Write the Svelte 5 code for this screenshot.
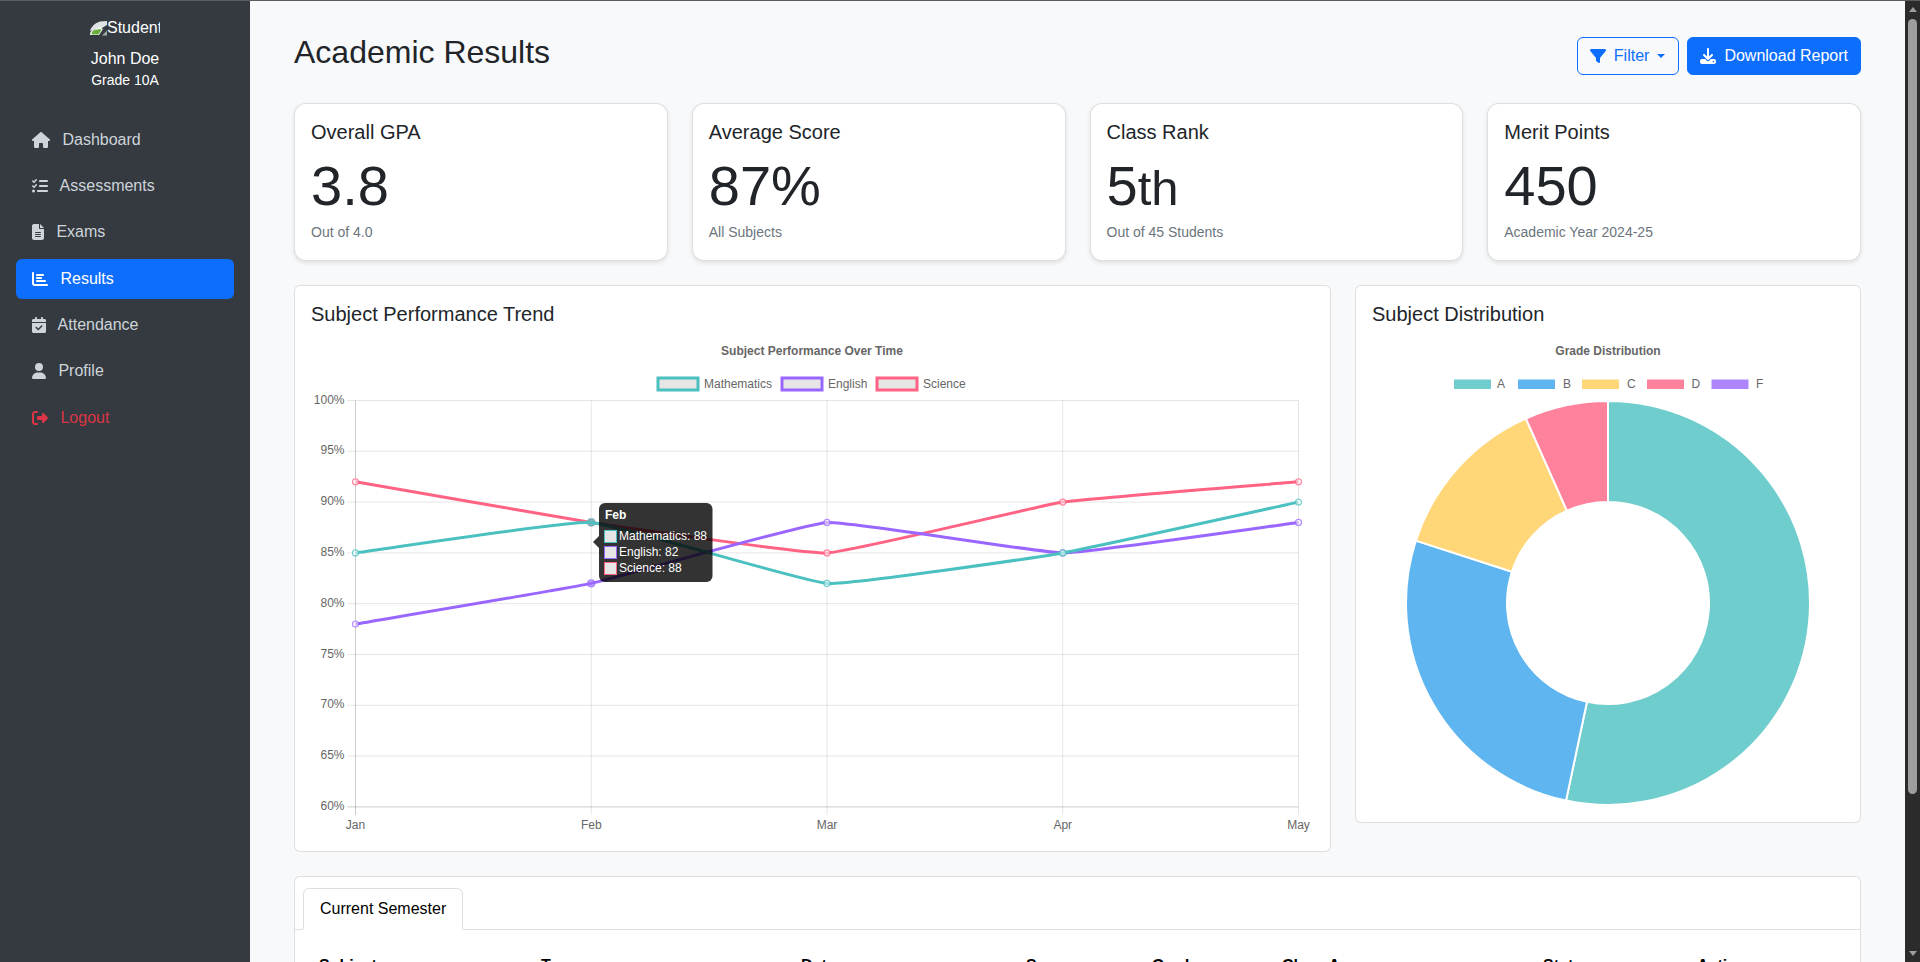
<script>
	const navItems = [
		{ label: 'Dashboard', vb: '0 0 576 512', d: 'M575.8 255.5c0 18-15 32.1-32 32.1h-32l.7 160.2c0 2.7-.2 5.4-.5 8.1V472c0 22.1-17.9 40-40 40H456c-1.1 0-2.2 0-3.3-.1c-1.4 .1-2.8 .1-4.2 .1H416 392c-22.1 0-40-17.9-40-40V448 384c0-17.7-14.3-32-32-32H256c-17.7 0-32 14.3-32 32v64 24c0 22.1-17.9 40-40 40H160 128.1c-1.5 0-3-.1-4.5-.2c-1.2 .1-2.4 .2-3.6 .2H104c-22.1 0-40-17.9-40-40V360c0-.9 0-1.9 .1-2.8V287.6H32c-18 0-32-14-32-32.1c0-9 3-17 10-24L266.4 8c7-7 15-8 22-8s15 2 21 7L564.8 231.5c8 7 12 15 11 24z' },
		{ label: 'Assessments', vb: '0 0 512 512', d: 'M152.1 38.2c9.9 8.9 10.7 24 1.8 33.9l-72 80c-4.4 4.9-10.6 7.8-17.2 7.9s-12.9-2.4-17.6-7L7 113C-2.3 103.6-2.3 88.4 7 79s24.6-9.4 33.9 0l22.1 22.1 55.1-61.2c8.9-9.9 24-10.7 33.9-1.8zm0 160c9.9 8.9 10.7 24 1.8 33.9l-72 80c-4.4 4.9-10.6 7.8-17.2 7.9s-12.9-2.4-17.6-7L7 273c-9.4-9.4-9.4-24.6 0-33.9s24.6-9.4 33.9 0l22.1 22.1 55.1-61.2c8.9-9.9 24-10.7 33.9-1.8zM224 96c0-17.7 14.3-32 32-32H480c17.7 0 32 14.3 32 32s-14.3 32-32 32H256c-17.7 0-32-14.3-32-32zm0 160c0-17.7 14.3-32 32-32H480c17.7 0 32 14.3 32 32s-14.3 32-32 32H256c-17.7 0-32-14.3-32-32zM160 416c0-17.7 14.3-32 32-32H480c17.7 0 32 14.3 32 32s-14.3 32-32 32H192c-17.7 0-32-14.3-32-32zM48 368a48 48 0 1 1 0 96 48 48 0 1 1 0-96z' },
		{ label: 'Exams', vb: '0 0 384 512', d: 'M64 0C28.7 0 0 28.7 0 64V448c0 35.3 28.7 64 64 64H320c35.3 0 64-28.7 64-64V160H256c-17.7 0-32-14.3-32-32V0H64zM256 0V128H384L256 0zM112 256H272c8.8 0 16 7.2 16 16s-7.2 16-16 16H112c-8.8 0-16-7.2-16-16s7.2-16 16-16zm0 64H272c8.8 0 16 7.2 16 16s-7.2 16-16 16H112c-8.8 0-16-7.2-16-16s7.2-16 16-16zm0 64H272c8.8 0 16 7.2 16 16s-7.2 16-16 16H112c-8.8 0-16-7.2-16-16s7.2-16 16-16z' },
		{ label: 'Results', active: true, vb: '0 0 512 512', d: 'M32 32c17.7 0 32 14.3 32 32V400c0 8.8 7.2 16 16 16H480c17.7 0 32 14.3 32 32s-14.3 32-32 32H80c-44.2 0-80-35.8-80-80V64C0 46.3 14.3 32 32 32zm96 96c0-17.7 14.3-32 32-32l192 0c17.7 0 32 14.3 32 32s-14.3 32-32 32l-192 0c-17.7 0-32-14.3-32-32zm32 64H288c17.7 0 32 14.3 32 32s-14.3 32-32 32H160c-17.7 0-32-14.3-32-32s14.3-32 32-32zm0 96H416c17.7 0 32 14.3 32 32s-14.3 32-32 32H160c-17.7 0-32-14.3-32-32s14.3-32 32-32z' },
		{ label: 'Attendance', vb: '0 0 448 512', d: 'M128 0c17.7 0 32 14.3 32 32V64H288V32c0-17.7 14.3-32 32-32s32 14.3 32 32V64h48c26.5 0 48 21.5 48 48v48H0V112C0 85.5 21.5 64 48 64H96V32c0-17.7 14.3-32 32-32zM0 192H448V464c0 26.5-21.5 48-48 48H48c-26.5 0-48-21.5-48-48V192zM329 305c9.4-9.4 9.4-24.6 0-33.9s-24.6-9.4-33.9 0l-95 95-47-47c-9.4-9.4-24.6-9.4-33.9 0s-9.4 24.6 0 33.9l64 64c9.4 9.4 24.6 9.4 33.9 0L329 305z' },
		{ label: 'Profile', vb: '0 0 448 512', d: 'M224 256A128 128 0 1 0 224 0a128 128 0 1 0 0 256zm-45.7 48C79.8 304 0 383.8 0 482.3C0 498.7 13.3 512 29.7 512H418.3c16.4 0 29.7-13.3 29.7-29.7C448 383.8 368.2 304 269.7 304H178.3z' },
		{ label: 'Logout', danger: true, vb: '0 0 512 512', d: 'M377.9 105.9L500.7 228.7c7.2 7.2 11.3 17.1 11.3 27.3s-4.1 20.1-11.3 27.3L377.9 406.1c-6.4 6.4-15 9.9-24 9.9c-18.7 0-33.9-15.2-33.9-33.9l0-62.1-128 0c-17.7 0-32-14.3-32-32l0-64c0-17.7 14.3-32 32-32l128 0 0-62.1c0-18.7 15.2-33.9 33.9-33.9c9 0 17.6 3.6 24 9.9zM160 96L96 96c-17.7 0-32 14.3-32 32l0 256c0 17.7 14.3 32 32 32l64 0c17.7 0 32 14.3 32 32s-14.3 32-32 32l-64 0c-53 0-96-43-96-96L0 128C0 75 43 32 96 32l64 0c17.7 0 32 14.3 32 32s-14.3 32-32 32z' }
	];

	const stats = [
		{ title: 'Overall GPA', value: '3.8', note: 'Out of 4.0' },
		{ title: 'Average Score', value: '87%', note: 'All Subjects' },
		{ title: 'Class Rank', value: '5', suffix: 'th', note: 'Out of 45 Students' },
		{ title: 'Merit Points', value: '450', note: 'Academic Year 2024-25' }
	];

	// line chart, in page coordinates (the svg viewBox starts at the canvas corner)
	const months = ['Jan', 'Feb', 'Mar', 'Apr', 'May'];
	const left = 355.5;
	const step = 235.75;
	const top = 400.5;
	const perPct = 10.16;
	const bottom = top + 40 * perPct;
	const right = left + 4 * step;
	const xAt = (i) => left + i * step;
	const yAt = (v) => top + (100 - v) * perPct;
	const ticks = [100, 95, 90, 85, 80, 75, 70, 65, 60];

	const series = [
		{ name: 'Science', color: '#ff6384', data: [92, 88, 85, 90, 92] },
		{ name: 'English', color: '#9966ff', data: [78, 82, 88, 85, 88] },
		{ name: 'Mathematics', color: '#4bc0c0', data: [85, 88, 82, 85, 90] }
	];

	const lineLegend = [
		{ name: 'Mathematics', color: '#4bc0c0', x: 658, tx: 704 },
		{ name: 'English', color: '#9966ff', x: 782, tx: 828 },
		{ name: 'Science', color: '#ff6384', x: 877, tx: 923 }
	];

	const tooltipRows = [
		{ text: 'Mathematics: 88', color: '#4bc0c0', y: 530.5 },
		{ text: 'English: 82', color: '#9966ff', y: 546.5 },
		{ text: 'Science: 88', color: '#ff6384', y: 562.5 }
	];

	// same control points as chart.js with a small tension
	function splinePath(data, tension = 0.1) {
		const pts = data.map((v, i) => [xAt(i), yAt(v)]);
		let d = `M${pts[0][0]} ${pts[0][1]}`;
		const ctrl = pts.map((p, i) => {
			const a = pts[i - 1] || p;
			const b = pts[i + 1] || p;
			const d1 = Math.hypot(p[0] - a[0], p[1] - a[1]);
			const d2 = Math.hypot(b[0] - p[0], b[1] - p[1]);
			const total = d1 + d2 || 1;
			const f1 = (tension * d1) / total;
			const f2 = (tension * d2) / total;
			return {
				prev: [p[0] - f1 * (b[0] - a[0]), p[1] - f1 * (b[1] - a[1])],
				next: [p[0] + f2 * (b[0] - a[0]), p[1] + f2 * (b[1] - a[1])]
			};
		});
		for (let i = 1; i < pts.length; i++) {
			const c1 = ctrl[i - 1].next;
			const c2 = ctrl[i].prev;
			d += `C${c1[0]} ${c1[1]} ${c2[0]} ${c2[1]} ${pts[i][0]} ${pts[i][1]}`;
		}
		return d;
	}

	// doughnut
	const cx = 1608;
	const cy = 603;
	const outer = 202;
	const inner = 101;
	const grades = [
		{ name: 'A', value: 8, color: '#6fcdcd', x: 1453.5, tx: 1497 },
		{ name: 'B', value: 4, color: '#5eb5ef', x: 1517.5, tx: 1563 },
		{ name: 'C', value: 2, color: '#ffd778', x: 1581.5, tx: 1627 },
		{ name: 'D', value: 1, color: '#ff829d', x: 1646.5, tx: 1691.5 },
		{ name: 'F', value: 0, color: '#ad85ff', x: 1711, tx: 1756 }
	];

	function polar(r, deg) {
		const a = ((deg - 90) * Math.PI) / 180;
		return `${cx + r * Math.cos(a)} ${cy + r * Math.sin(a)}`;
	}

	function slicePath(from, to) {
		const large = to - from > 180 ? 1 : 0;
		return `M${polar(outer, from)}A${outer} ${outer} 0 ${large} 1 ${polar(outer, to)}L${polar(inner, to)}A${inner} ${inner} 0 ${large} 0 ${polar(inner, from)}Z`;
	}

	let sum = 0;
	const slices = [];
	for (const g of grades) {
		if (g.value > 0) {
			slices.push({ color: g.color, d: slicePath((sum / 15) * 360, ((sum + g.value) / 15) * 360) });
		}
		sum += g.value;
	}

	const columns = ['Subject', 'Type', 'Date', 'Score', 'Grade', 'Class Avg', 'Status', 'Action'];
</script>

<div class="page">
	<aside class="sidebar">
		<div class="brand">
			<span class="logo">
				<svg class="broken" viewBox="0 0 17 15" aria-hidden="true">
					<path d="M0 10C1 6 5 2 10 .5L17 0V4L12 7 3 9z" fill="#dfe2e3" />
					<path d="M0 14c0-3 1-4 3-5l7-2.500 3 1.500-4 6z" fill="#fff" />
					<path d="M1.500 13.500c0-2.500 1-3.500 3-4.500L10 8l1.500.5-3 5z" fill="#69ad3f" />
					<path d="M12 14.500h5V9.500z" fill="#a3a8aa" />
				</svg>Student
			</span>
			<div class="name">John Doe</div>
			<div class="grade">Grade 10A</div>
		</div>
		<nav class="nav">
			{#each navItems as item}
				<a href="#top" class="nav-link" class:active={item.active} class:danger={item.danger}>
					<svg class="nav-icon" viewBox={item.vb} aria-hidden="true"><path d={item.d} fill="currentColor" /></svg>
					<span class="nav-label">{' ' + item.label}</span>
				</a>
			{/each}
		</nav>
	</aside>

	<main class="main">
		<header class="head">
			<h1>Academic Results</h1>
			<div class="actions">
				<button class="btn outline">
					<svg class="btn-icon" viewBox="0 0 512 512" aria-hidden="true"><path fill="currentColor" d="M3.9 54.9C10.5 40.9 24.5 32 40 32H472c15.5 0 29.5 8.9 36.1 22.9s4.6 30.5-5.2 42.5L320 320.9V448c0 12.1-6.8 23.2-17.7 28.6s-23.8 4.3-33.5-3l-64-48c-8.1-6-12.8-15.5-12.8-25.6V320.9L9 97.3C-.7 85.4-2.8 68.8 3.9 54.9z" /></svg>
					Filter
					<span class="caret"></span>
				</button>
				<button class="btn solid">
					<svg class="btn-icon" viewBox="0 0 512 512" aria-hidden="true"><path fill="currentColor" d="M288 32c0-17.7-14.3-32-32-32s-32 14.3-32 32V274.7l-73.4-73.4c-12.5-12.5-32.8-12.5-45.3 0s-12.5 32.8 0 45.3l128 128c12.5 12.5 32.8 12.5 45.3 0l128-128c12.5-12.5 12.5-32.8 0-45.3s-32.8-12.5-45.3 0L288 274.7V32zM64 352c-35.3 0-64 28.7-64 64v32c0 35.3 28.7 64 64 64H448c35.3 0 64-28.7 64-64V416c0-35.3-28.7-64-64-64H346.5l-45.3 45.3c-25 25-65.5 25-90.5 0L165.5 352H64zm368 56a24 24 0 1 1 0 48 24 24 0 1 1 0-48z" /></svg>
					Download Report
				</button>
			</div>
		</header>

		<section class="stats">
			{#each stats as s}
				<div class="stat">
					<h5>{s.title}</h5>
					<div class="value">{s.value}{#if s.suffix}<small>{s.suffix}</small>{/if}</div>
					<div class="note">{s.note}</div>
				</div>
			{/each}
		</section>

		<section class="charts">
			<div class="card">
				<h5>Subject Performance Trend</h5>
				<svg class="chart" viewBox="311 334 1003 501" width="1003" height="501">
					<text class="chart-title" x="812" y="355" text-anchor="middle">Subject Performance Over Time</text>
					{#each lineLegend as l}
						<rect x={l.x} y="378" width="40" height="12" fill="#e6e6e6" stroke={l.color} stroke-width="3" />
						<text class="tick" x={l.tx} y="388">{l.name}</text>
					{/each}
					{#each ticks as t}
						<line class="grid" x1={left - 8} x2={right} y1={yAt(t)} y2={yAt(t)} class:axis={t === 60} />
						<text class="tick" x={left - 11} y={yAt(t) + 3} text-anchor="end">{t}%</text>
					{/each}
					{#each months as m, i}
						<line class="grid" x1={xAt(i)} x2={xAt(i)} y1={top} y2={bottom + 8} class:axis={i === 0} />
						<text class="tick" x={xAt(i)} y={bottom + 22} text-anchor="middle">{m}</text>
					{/each}
					{#each series as s}
						<path d={splinePath(s.data)} fill="none" stroke={s.color} stroke-width="3" />
						{#each s.data as v, i}
							<circle cx={xAt(i)} cy={yAt(v)} r={i === 1 ? 3.5 : 3} fill={i === 1 ? s.color : '#fff'} fill-opacity={i === 1 ? 0.6 : 0.5} stroke={s.color} stroke-opacity="0.75" stroke-width="1.2" />
						{/each}
					{/each}
					<path d="M599 536l-6 6 6 6z" fill="#000" fill-opacity="0.8" />
					<rect x="599" y="503" width="113.5" height="79" rx="6" fill="#000" fill-opacity="0.8" />
					<text class="tip-title" x="605" y="519">Feb</text>
					{#each tooltipRows as r}
						<rect x="604.5" y={r.y} width="12" height="12" fill="#e6e6e6" stroke={r.color} stroke-width="1" />
						<text class="tip-text" x="619" y={r.y + 9.5}>{r.text}</text>
					{/each}
				</svg>
			</div>
			<div class="card donut">
				<h5>Subject Distribution</h5>
				<svg class="chart" viewBox="1372 334 471 472" width="471" height="472">
					<text class="chart-title" x="1608" y="355" text-anchor="middle">Grade Distribution</text>
					{#each grades as g}
						<rect x={g.x} y="379" width="38" height="10.5" fill={g.color} stroke="#fff" stroke-width="1" />
						<text class="tick" x={g.tx} y="388">{g.name}</text>
					{/each}
					{#each slices as s}
						<path d={s.d} fill={s.color} stroke="#fff" stroke-width="2" />
					{/each}
				</svg>
			</div>
		</section>

		<section class="card table-card">
			<div class="tabs">
				<span class="tab">Current Semester</span>
			</div>
			<div class="table-wrap">
				<table>
					<thead>
						<tr>
							{#each columns as c}
								<th>{c}</th>
							{/each}
						</tr>
					</thead>
				</table>
			</div>
		</section>
	</main>

	<div class="scrollbar">
		<span class="arrow up"></span>
		<span class="thumb"></span>
		<span class="arrow down"></span>
	</div>
</div>

<style>
	:global(body) {
		margin: 0;
		overflow: hidden;
		font-family: 'Liberation Sans', Arial, sans-serif;
		color: #212529;
	}

	.page {
		display: flex;
		height: 961px;
		border-top: 1px solid #5c5c5c;
		overflow: hidden;
		background: #f8f9fa;
	}

	.sidebar {
		flex: 0 0 250px;
		box-sizing: border-box;
		background: #343a40;
		color: #fff;
	}

	.brand {
		display: flex;
		flex-direction: column;
		align-items: center;
		padding-top: 16px;
		height: 118.5px;
		box-sizing: border-box;
	}

	.logo {
		display: flex;
		align-items: center;
		width: 70px;
		height: 22px;
		margin-bottom: 7.5px;
		overflow: hidden;
		white-space: nowrap;
		font-size: 16px;
	}

	.broken {
		flex: 0 0 17px;
		width: 17px;
		height: 15px;
	}

	.name {
		font-size: 16px;
		line-height: 24px;
	}

	.grade {
		font-size: 14px;
		line-height: 19px;
	}

	.nav {
		display: flex;
		flex-direction: column;
		gap: 6.35px;
		padding: 0 16px;
	}

	.nav-link {
		display: flex;
		align-items: center;
		gap: 8px;
		height: 40px;
		padding: 0 16px;
		border-radius: 6px;
		font-size: 16px;
		color: #ced4da;
		text-decoration: none;
	}

	.nav-link.active {
		background: #0d6efd;
		color: #fff;
	}

	.nav-link.danger {
		color: #dc3545;
	}

	.nav-label {
		white-space: pre;
	}

	.nav-icon {
		height: 16px;
		width: auto;
		flex: none;
	}

	.main {
		flex: 1;
		min-width: 0;
		box-sizing: border-box;
		padding: 32px 44px 0;
		overflow: hidden;
	}

	.head {
		display: flex;
		justify-content: space-between;
		align-items: center;
		margin-bottom: 24px;
	}

	h1 {
		margin: 0 0 8px;
		font-size: 32px;
		font-weight: 400;
		line-height: 38.4px;
	}

	.actions {
		display: flex;
		gap: 8px;
	}

	.btn {
		display: inline-flex;
		align-items: center;
		height: 38px;
		padding: 0 12px;
		border: 1px solid #0d6efd;
		border-radius: 6px;
		font: inherit;
		font-size: 16px;
	}

	.btn.outline {
		padding-right: 13px;
		background: transparent;
		color: #0d6efd;
	}

	.btn.solid {
		background: #0d6efd;
		color: #fff;
	}

	.btn-icon {
		width: 16px;
		height: 16px;
		margin-right: 8px;
	}

	.caret {
		margin-left: 8px;
		border-top: 4.8px solid currentColor;
		border-left: 4.8px solid transparent;
		border-right: 4.8px solid transparent;
	}

	.stats {
		display: grid;
		grid-template-columns: repeat(4, 1fr);
		gap: 24px;
		margin-bottom: 24px;
	}

	.stat {
		box-sizing: border-box;
		height: 158px;
		padding: 16px;
		background: #fff;
		border: 1px solid rgba(0, 0, 0, 0.125);
		border-radius: 12px;
		box-shadow: 0 2px 4px rgba(0, 0, 0, 0.1);
	}

	h5 {
		margin: 0 0 8px;
		font-size: 20px;
		font-weight: 400;
		line-height: 24px;
	}

	.value {
		height: 67.2px;
		font-size: 56px;
		line-height: 67.2px;
		margin-bottom: 2px;
	}

	.value small {
		font-size: 0.875em;
	}

	.note {
		font-size: 14px;
		line-height: 21px;
		color: #6c757d;
	}

	.charts {
		display: grid;
		grid-template-columns: 1037px 506px;
		gap: 24px;
		align-items: start;
		margin-bottom: 24px;
	}

	.card {
		box-sizing: border-box;
		padding: 16px;
		background: #fff;
		border: 1px solid rgba(0, 0, 0, 0.125);
		border-radius: 6px;
	}

	.chart {
		display: block;
	}

	.chart-title {
		font: bold 12px 'Liberation Sans', Arial, sans-serif;
		fill: #666;
	}

	.tick {
		font: 12px 'Liberation Sans', Arial, sans-serif;
		fill: #666;
	}

	.grid {
		stroke: rgba(0, 0, 0, 0.1);
		stroke-width: 1;
	}

	.axis {
		stroke: rgba(0, 0, 0, 0.2);
	}

	.tip-title {
		font: bold 12px 'Liberation Sans', Arial, sans-serif;
		fill: #fff;
	}

	.tip-text {
		font: 12px 'Liberation Sans', Arial, sans-serif;
		fill: #fff;
	}

	.table-card {
		padding: 0;
	}

	.tabs {
		display: flex;
		height: 53px;
		box-sizing: border-box;
		padding: 11px 8px 0;
		border-bottom: 1px solid rgba(0, 0, 0, 0.125);
	}

	.tab {
		box-sizing: border-box;
		height: 42px;
		padding: 8px 16px;
		line-height: 24px;
		font-size: 16px;
		color: #000;
		background: #fff;
		border: 1px solid rgba(0, 0, 0, 0.125);
		border-bottom-color: #fff;
		border-radius: 6px 6px 0 0;
	}

	.table-wrap {
		padding: 16px;
	}

	table {
		width: 100%;
		table-layout: fixed;
		border-collapse: collapse;
		font-size: 16px;
	}

	th {
		padding: 8px;
		text-align: left;
		line-height: 24px;
		color: #000;
	}

	th:nth-child(1) { width: 206px; }
	th:nth-child(2) { width: 244px; }
	th:nth-child(3) { width: 209px; }
	th:nth-child(4) { width: 110px; }
	th:nth-child(5) { width: 114px; }
	th:nth-child(6) { width: 245px; }
	th:nth-child(7) { width: 138px; }

	.scrollbar {
		flex: 0 0 15px;
		display: flex;
		flex-direction: column;
		align-items: center;
		background: #2b2b2b;
	}

	.arrow {
		width: 0;
		height: 0;
		border-left: 4.5px solid transparent;
		border-right: 4.5px solid transparent;
	}

	.arrow.up {
		margin-top: 6px;
		border-bottom: 5px solid #9e9e9e;
	}

	.thumb {
		width: 9px;
		height: 775px;
		margin-top: 7px;
		background: #9e9e9e;
		border-radius: 4.5px;
	}

	.arrow.down {
		margin-top: auto;
		margin-bottom: 6px;
		border-top: 5px solid #9e9e9e;
	}
</style>
